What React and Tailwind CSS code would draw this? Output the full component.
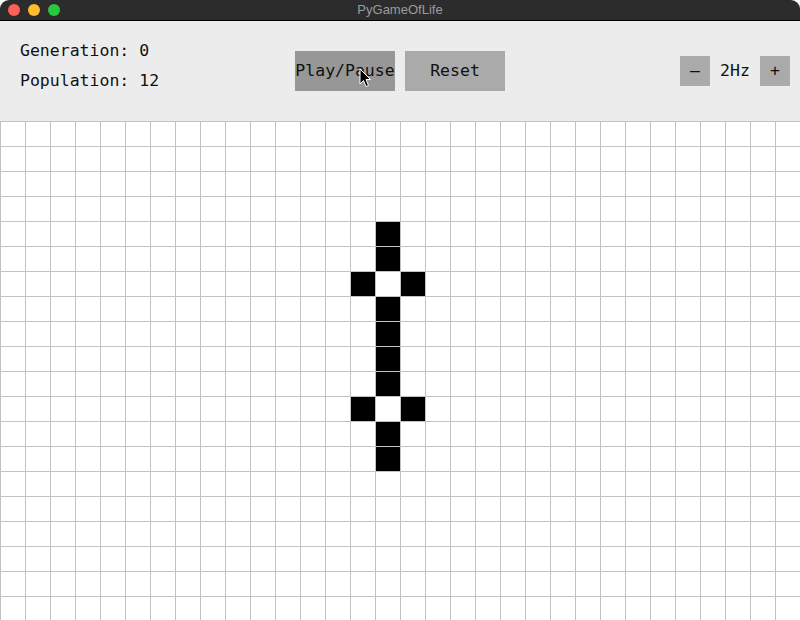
import React from 'react';

const COLS = 32;
const ROWS = 20;

const ALIVE = new Set([
  '15,4', '15,5', '14,6', '16,6', '15,7', '15,8',
  '15,9', '15,10', '14,11', '16,11', '15,12', '15,13',
]);

const MONO = { fontFamily: '"DejaVu Sans Mono", "Liberation Mono", monospace' };

function TitleBar() {
  return (
    <div className="relative flex h-[21px] items-center bg-[#2c2c2c] border-b border-black rounded-t-[9px]">
      <div className="flex gap-2 pl-2">
        <span className="h-3 w-3 rounded-full bg-[#fe5f57]" />
        <span className="h-3 w-3 rounded-full bg-[#febc2e]" />
        <span className="h-3 w-3 rounded-full bg-[#28c840]" />
      </div>
      <div
        className="absolute inset-0 flex items-center justify-center text-[13px] text-[#9b9b9b]"
        style={{ fontFamily: '"Liberation Sans", Arial, sans-serif' }}
      >
        PyGameOfLife
      </div>
    </div>
  );
}

function Cursor() {
  return (
    <svg className="absolute left-[359px] top-[47px]" width="13" height="20" viewBox="0 0 13 20">
      <path d="M1 1 L1 16 L4.5 12.5 L7 18.5 L9.5 17.5 L7 11.5 L11.5 11.5 Z" fill="#000" stroke="#fff" strokeWidth="1" strokeLinejoin="round" />
    </svg>
  );
}

function Controls() {
  return (
    <div className="relative flex h-[100px] bg-[#ececec] text-[16.5px] text-[#111]" style={MONO}>
      <div className="w-[295px] pl-5 pt-[15px] leading-[30px]">
        <div>Generation: 0</div>
        <div>Population: 12</div>
      </div>
      <div className="flex gap-[10px] pt-[30px]">
        <button className="h-10 w-[100px] bg-[#979797] leading-[40px]">Play/Pause</button>
        <button className="h-10 w-[100px] bg-[#aaaaaa] leading-[40px]">Reset</button>
      </div>
      <div className="ml-auto flex pr-[10px] pt-[35px]">
        <button className="h-[30px] w-[30px] bg-[#aaaaaa] leading-[30px]">–</button>
        <span className="w-[50px] text-center leading-[30px]">2Hz</span>
        <button className="h-[30px] w-[30px] bg-[#aaaaaa] leading-[30px]">+</button>
      </div>
      <Cursor />
    </div>
  );
}

function Board() {
  const cells = [];
  for (let r = 0; r < ROWS; r++) {
    for (let c = 0; c < COLS; c++) {
      const alive = ALIVE.has(`${c},${r}`);
      cells.push(
        <div
          key={`${c}-${r}`}
          className={`border-l border-t border-[#c2c2c2] ${alive ? 'bg-black' : 'bg-white'}`}
        />
      );
    }
  }
  return (
    <div className="grid flex-1 grid-cols-[repeat(32,25px)] auto-rows-[25px] overflow-hidden bg-white">
      {cells}
    </div>
  );
}

export default function App() {
  return (
    <div className="flex h-[620px] w-[800px] flex-col overflow-hidden bg-white">
      <TitleBar />
      <Controls />
      <Board />
    </div>
  );
}
